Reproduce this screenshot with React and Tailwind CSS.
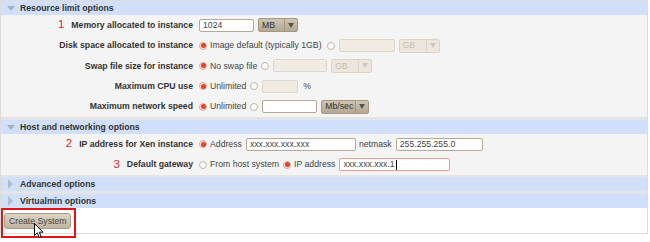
import React from 'react';

const Arrow = ({ dim }) => (
  <svg width="6" height="5" viewBox="0 0 6 5">
    <path d="M0 0 L6 0 L3 5 Z" fill={dim ? '#cfc7b8' : '#5a5245'} />
  </svg>
);

const Select = ({ label, width, disabled }) => (
  <div
    className={`flex h-[14px] items-stretch rounded-[2px] border ${
      disabled
        ? 'border-[#dcd4c6] bg-[#ece7de] text-[#c4bcad]'
        : 'border-[#a39882] bg-linear-to-b from-[#cec5b5] to-[#b3a893] text-[#333]'
    }`}
    style={{ width }}
  >
    <span className="flex flex-1 items-center whitespace-nowrap pl-[3px]">{label}</span>
    <span
      className={`flex w-[13px] shrink-0 items-center justify-center border-l ${
        disabled ? 'border-[#dcd4c6]' : 'border-[#a39882]'
      }`}
    >
      <Arrow dim={disabled} />
    </span>
  </div>
);

const Input = ({ width, value, disabled, red, caret }) => (
  <div
    className={`flex h-[13px] items-center rounded-[2px] border px-[3px] text-[#444] ${
      disabled
        ? 'border-[#ddd5c7] bg-[#f0ece4]'
        : red
        ? 'border-[#f19a88] bg-white'
        : 'border-[#b3a996] bg-white'
    }`}
    style={{ width }}
  >
    {value}
    {caret && <span className="ml-[1px] inline-block h-[10px] w-[1px] bg-black" />}
  </div>
);

const Radio = ({ on }) =>
  on ? (
    <span className="flex h-[8px] w-[8px] shrink-0 items-center justify-center rounded-full border border-[#d9a99c] bg-[#fbe3dc]">
      <span className="h-[5px] w-[5px] rounded-full bg-[#e2432a]" />
    </span>
  ) : (
    <span className="h-[8px] w-[8px] shrink-0 rounded-full border border-[#bdb5a8] bg-white" />
  );

const Header = ({ title, open }) => (
  <div className="flex h-[14px] items-center bg-[#d1e0fa] font-bold text-[#333]">
    <span className="flex w-[19px] justify-center">
      {open ? (
        <svg width="8" height="5" viewBox="0 0 8 5">
          <path d="M0 0 L8 0 L4 5 Z" fill="#a7afbe" />
        </svg>
      ) : (
        <svg width="5" height="10" viewBox="0 0 5 10">
          <path d="M0 0 L5 5 L0 10 Z" fill="#b3bccb" />
        </svg>
      )}
    </span>
    {title}
  </div>
);

const Row = ({ num, label, children }) => (
  <div className="flex h-[20.4px] items-center">
    <div className="flex w-[192px] items-center justify-end font-bold text-[#333]">
      {num && (
        <span className="mr-[7px] text-[11.5px] font-normal leading-none text-[#e21b1b]">{num}</span>
      )}
      {label}
    </div>
    <div className="flex items-center pl-[6px] text-[#444]">{children}</div>
  </div>
);

export default function App() {
  return (
    <div className="relative h-[242px] w-[650px] bg-white font-['Liberation_Sans',Arial,sans-serif] text-[8.7px] leading-none">
      <div className="flex h-[234px] w-[648px] flex-col border border-[#dcdcdc] bg-white">
        <Header title="Resource limit options" open />
        <div className="h-[102px] bg-[#f4f4f4]">
          <Row num="1" label="Memory allocated to instance">
            <Input width={55} value="1024" />
            <span className="w-[4px]" />
            <Select label="MB" width={40} />
          </Row>
          <Row label="Disk space allocated to instance">
            <Radio on />
            <span className="ml-[3px] mr-[5px]">Image default (typically 1GB)</span>
            <Radio />
            <span className="w-[4px]" />
            <Input width={56} disabled />
            <span className="w-[4px]" />
            <Select label="GB" width={41} disabled />
          </Row>
          <Row label="Swap file size for instance">
            <Radio on />
            <span className="ml-[3px] mr-[4px]">No swap file</span>
            <Radio />
            <span className="w-[4px]" />
            <Input width={54} disabled />
            <span className="w-[4px]" />
            <Select label="GB" width={41} disabled />
          </Row>
          <Row label="Maximum CPU use">
            <Radio on />
            <span className="ml-[3px] mr-[4px]">Unlimited</span>
            <Radio />
            <span className="w-[4px]" />
            <Input width={36} disabled />
            <span className="ml-[5px]">%</span>
          </Row>
          <Row label="Maximum network speed">
            <Radio on />
            <span className="ml-[3px] mr-[4px]">Unlimited</span>
            <Radio />
            <span className="w-[4px]" />
            <Input width={55} />
            <span className="w-[4px]" />
            <Select label="Mb/sec" width={48} />
          </Row>
        </div>
        <div className="h-[3px] bg-[#e4e4e4]" />
        <Header title="Host and networking options" open />
        <div className="h-[41px] bg-[#f4f4f4]">
          <Row num="2" label="IP address for Xen instance">
            <Radio on />
            <span className="ml-[3px] mr-[4px]">Address</span>
            <Input width={110} value="xxx.xxx.xxx.xxx" />
            <span className="ml-[3px] mr-[4px]">netmask</span>
            <Input width={87} value="255.255.255.0" />
          </Row>
          <Row num="3" label="Default gateway">
            <Radio />
            <span className="ml-[3px] mr-[4px]">From host system</span>
            <Radio on />
            <span className="ml-[3px] mr-[4px]">IP address</span>
            <Input width={111} value="xxx.xxx.xxx.1" red caret />
          </Row>
        </div>
        <div className="h-[2px] bg-[#e4e4e4]" />
        <Header title="Advanced options" />
        <div className="h-[3px] bg-[#e4e4e4]" />
        <Header title="Virtualmin options" />
        <div className="flex flex-1 items-start pl-[3px] pt-[5px]">
          <button className="h-[16px] rounded-[3px] border border-[#a99d89] bg-linear-to-b from-[#dcd4c5] to-[#bfb5a1] px-[4px] text-[8.7px] leading-none text-[#444]">
            Create System
          </button>
        </div>
      </div>
      <div className="absolute left-[1px] top-[208px] h-[30px] w-[75px] border-2 border-[#e41414]" />
      <svg className="absolute left-[34px] top-[223px]" width="10" height="16" viewBox="0 0 10 16">
        <path
          d="M0.5 0.5 L0.5 12.5 L3.3 9.8 L5.3 14.5 L7.2 13.7 L5.3 9.2 L9 9.2 Z"
          fill="white"
          stroke="black"
          strokeWidth="1"
          strokeLinejoin="round"
        />
      </svg>
    </div>
  );
}
